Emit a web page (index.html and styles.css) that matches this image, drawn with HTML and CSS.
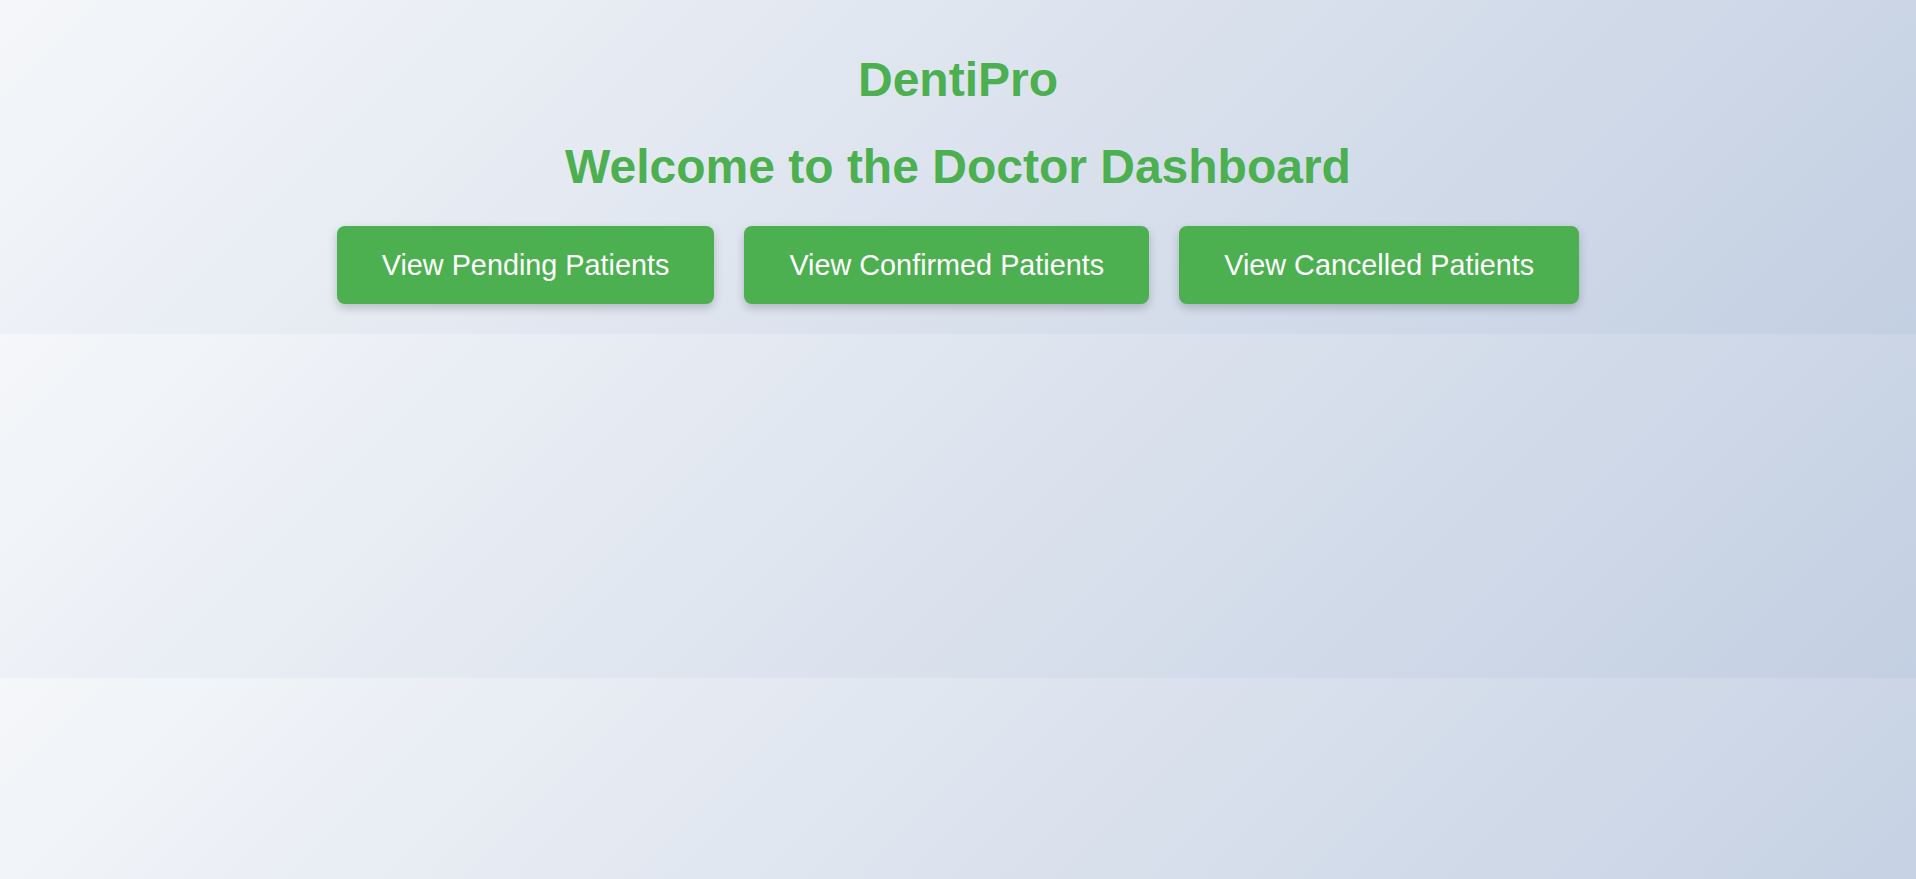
FILE: index.html
```html
<!DOCTYPE html>
<html lang="en">
<head>
<meta charset="utf-8">
<title>DentiPro - Doctor Dashboard</title>
<link rel="stylesheet" href="styles.css">
</head>
<body>
<header class="dashboard">
  <h1 class="brand">DentiPro</h1>
  <h2 class="welcome">Welcome to the Doctor Dashboard</h2>
  <nav class="actions">
    <button class="action-btn" type="button">View Pending Patients</button>
    <button class="action-btn" type="button">View Confirmed Patients</button>
    <button class="action-btn" type="button">View Cancelled Patients</button>
  </nav>
</header>
</body>
</html>
```
FILE: styles.css
```css
html {
  background: linear-gradient(135deg, #f5f7fa 0%, #c3cfe2 100%);
  background-size: 100% 344px;
  background-position: 0 -10px;
  background-repeat: repeat;
}

body {
  margin: 0;
  font-family: "Liberation Sans", Arial, sans-serif;
}

.dashboard {
  padding: 20px 0 30px;
  text-align: center;
}

.brand,
.welcome {
  margin: 32px 0;
  font-size: 48px;
  font-weight: bold;
  line-height: normal;
  color: #4caf50;
}

.actions {
  display: flex;
  justify-content: center;
  gap: 30px;
}

.action-btn {
  font-family: "Liberation Sans", Arial, sans-serif;
  font-size: 28.8px;
  line-height: 34px;
  padding: 22px 45px;
  color: #ffffff;
  background: #4caf50;
  border: none;
  border-radius: 8px;
  box-shadow: 0 4px 10px rgba(0, 0, 0, 0.2);
  cursor: pointer;
}
```
